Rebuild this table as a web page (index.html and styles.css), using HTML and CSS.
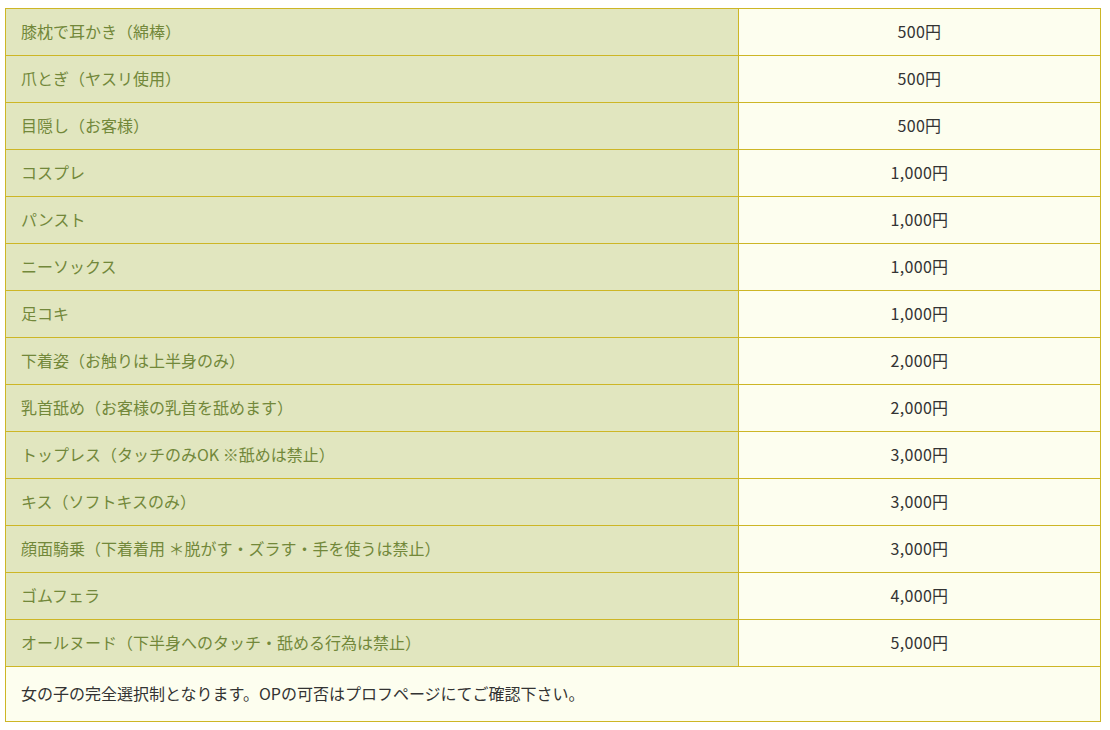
FILE: index.html
```html
<!DOCTYPE html>
<html lang="ja">
<head>
<meta charset="utf-8">
<link rel="stylesheet" href="styles.css">
</head>
<body>
<table class="price">
<tbody>
<tr><th>膝枕で耳かき（綿棒）</th><td>500円</td></tr>
<tr><th>爪とぎ（ヤスリ使用）</th><td>500円</td></tr>
<tr><th>目隠し（お客様）</th><td>500円</td></tr>
<tr><th>コスプレ</th><td>1,000円</td></tr>
<tr><th>パンスト</th><td>1,000円</td></tr>
<tr><th>ニーソックス</th><td>1,000円</td></tr>
<tr><th>足コキ</th><td>1,000円</td></tr>
<tr><th>下着姿（お触りは上半身のみ）</th><td>2,000円</td></tr>
<tr><th>乳首舐め（お客様の乳首を舐めます）</th><td>2,000円</td></tr>
<tr><th>トップレス（タッチのみOK ※舐めは禁止）</th><td>3,000円</td></tr>
<tr><th>キス（ソフトキスのみ）</th><td>3,000円</td></tr>
<tr><th>顔面騎乗（下着着用 ＊脱がす・ズラす・手を使うは禁止）</th><td>3,000円</td></tr>
<tr><th>ゴムフェラ</th><td>4,000円</td></tr>
<tr><th>オールヌード（下半身へのタッチ・舐める行為は禁止）</th><td>5,000円</td></tr>
<tr><td class="note" colspan="2">女の子の完全選択制となります。OPの可否はプロフページにてご確認下さい。</td></tr>
</tbody>
</table>
</body>
</html>
```

FILE: styles.css
```css
html, body {
  margin: 0;
  padding: 0;
  background: #ffffff;
}
body {
  padding: 8px 9px 0 5px;
  font-family: "Noto Sans CJK JP", "Noto Sans", sans-serif;
  font-size: 16px;
}
.price {
  width: 1096px;
  border-collapse: collapse;
  table-layout: fixed;
}
.price th,
.price td {
  border: 1px solid #cdb626;
  height: 47px;
  box-sizing: border-box;
  padding: 0 15px 3px;
  line-height: 22px;
  vertical-align: middle;
}
.price th {
  width: 733px;
  background: #e1e6bf;
  color: #72883a;
  font-weight: normal;
  text-align: left;
}
.price td {
  background: #fdfeef;
  color: #333333;
  text-align: center;
  letter-spacing: 0.3px;
}
.price td.note {
  height: 55px;
  text-align: left;
  color: #333333;
  letter-spacing: 0;
}
```
